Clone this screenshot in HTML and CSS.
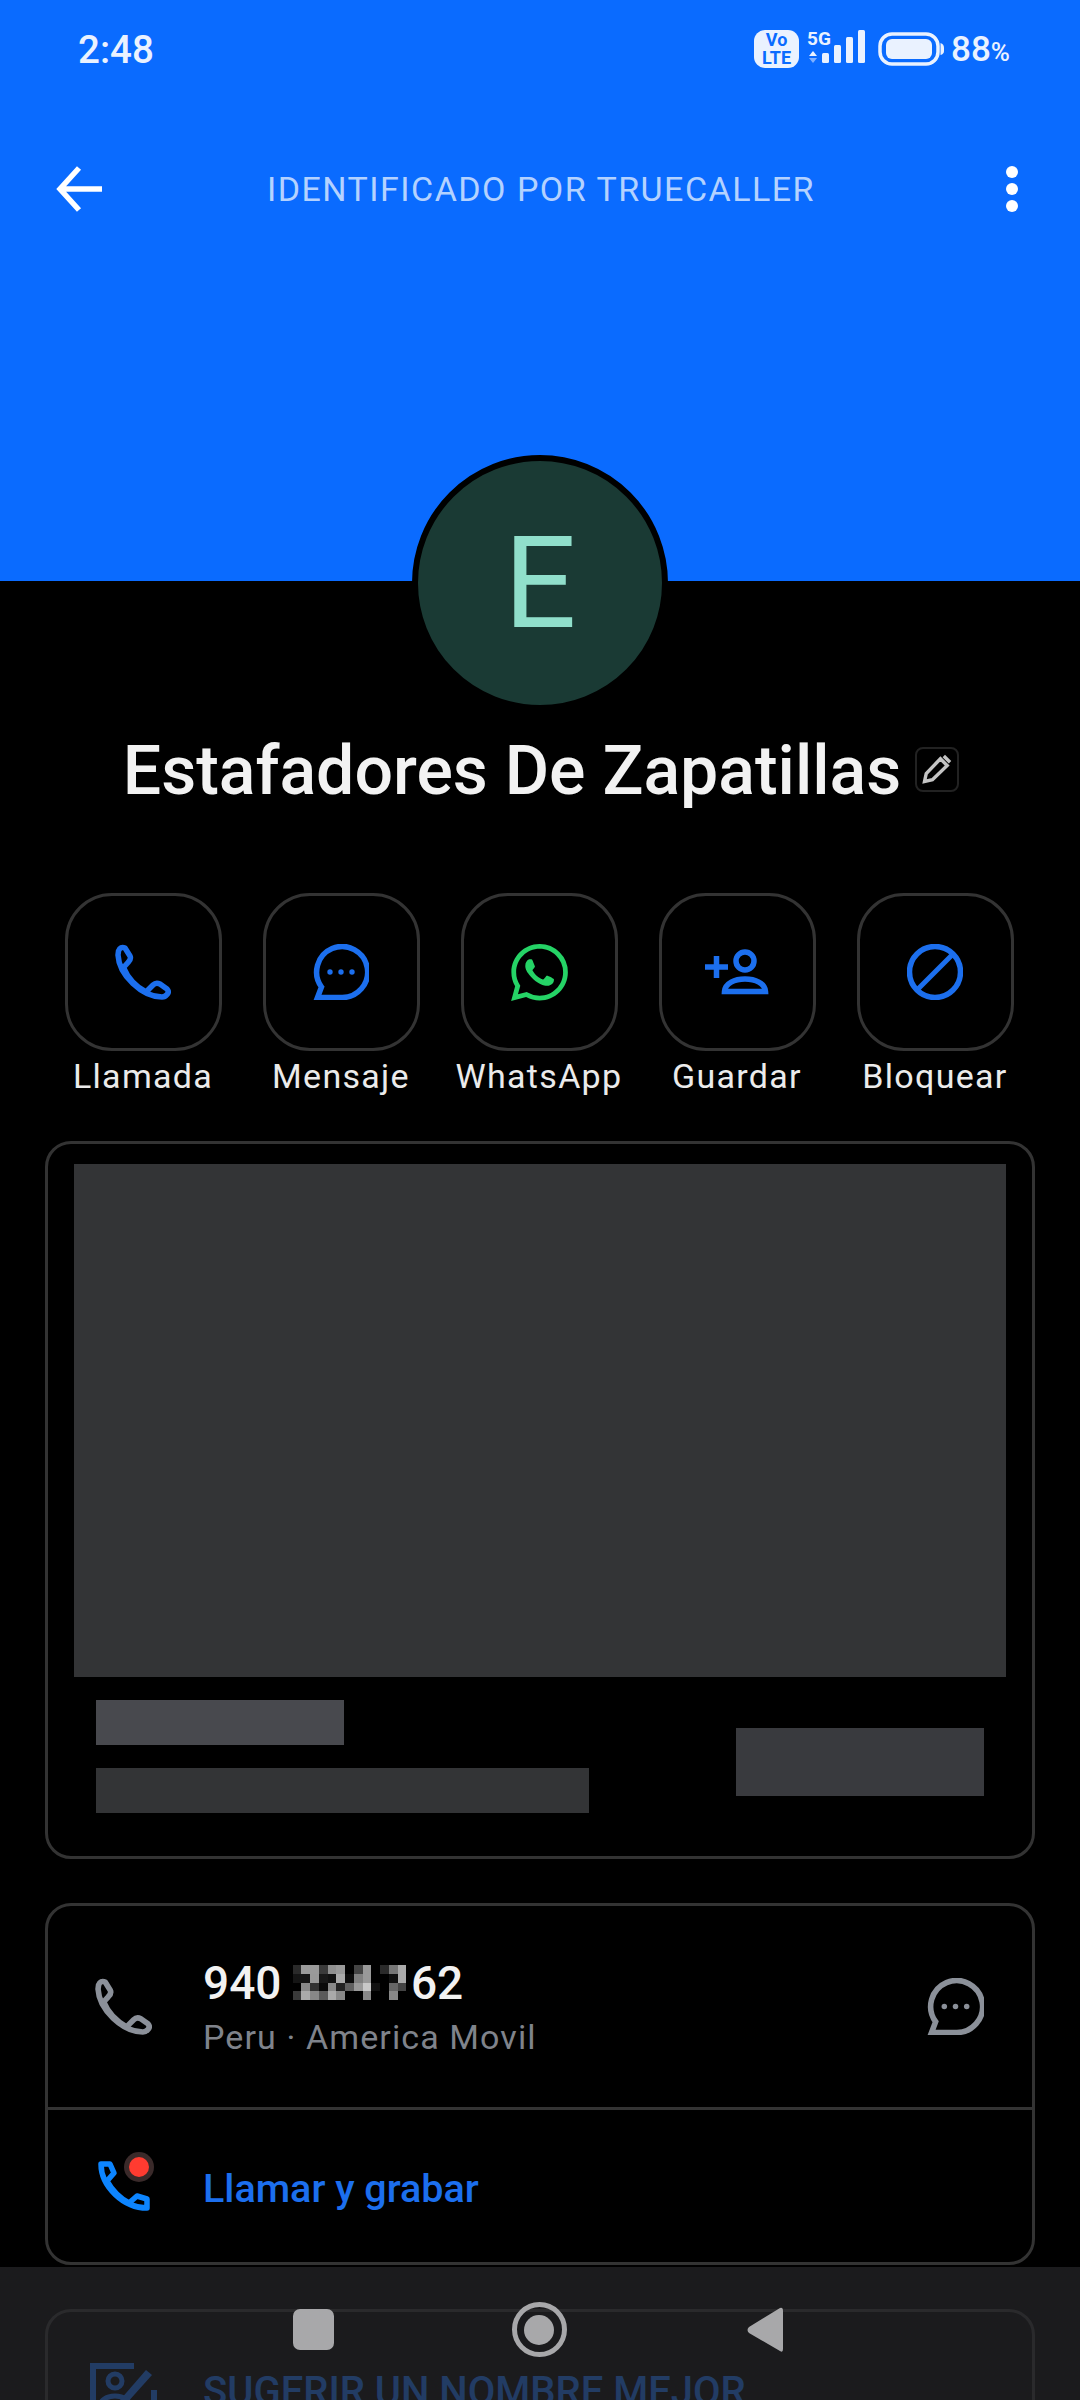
FILE: index.html
```html
<!DOCTYPE html>
<html lang="es">
<head>
<meta charset="utf-8">
<title>Estafadores De Zapatillas</title>
<link rel="stylesheet" href="styles.css">
</head>
<body>
<svg class="sprite" aria-hidden="true">
  <symbol id="phone" viewBox="0 0 56 56">
    <path fill="none" stroke="currentColor" stroke-width="5.5" stroke-linejoin="round" d="M3.5 7 Q5.5 2 10 4 L15 12 Q16.5 15 13 18.5 L8.5 23.5 C12 32 20 42 31 48 L38 41 Q41 38 45 40 L52 45 Q54.5 48 52 50.5 Q50 53 47 53 C27 53 4 31 3 11 Z"/>
  </symbol>
  <symbol id="bubble" viewBox="0 0 56 56">
    <path fill="none" stroke="currentColor" stroke-width="5.5" d="M8.5 43 A25.5 25.5 0 1 1 28 53.5 H4.5 Z"/>
    <circle cx="17" cy="28" r="2.7" fill="currentColor"/>
    <circle cx="28" cy="28" r="2.7" fill="currentColor"/>
    <circle cx="39" cy="28" r="2.7" fill="currentColor"/>
  </symbol>
</svg>

<header class="hero">
  <div class="status">
    <span class="time">2:48</span>
    <div class="status-icons">
      <span class="volte">Vo<br>LTE</span>
      <svg class="signal" viewBox="0 -6 58 44" width="58" height="44">
        <text x="0" y="15" class="five-g">5G</text>
        <path d="M2 26 L6 21 L10 26 Z" fill="#eaf2ff"/>
        <path d="M2 28 L10 28 L6 33 Z" fill="#7fb0ff"/>
        <rect x="15" y="23" width="7" height="10" rx="1.5" fill="#eaf2ff"/>
        <rect x="27" y="15" width="7" height="18" rx="1.5" fill="#eaf2ff"/>
        <rect x="39" y="7" width="7" height="26" rx="1.5" fill="#eaf2ff"/>
        <rect x="51" y="0" width="7" height="33" rx="1.5" fill="#eaf2ff"/>
      </svg>
      <svg class="battery" viewBox="0 0 66 34" width="66" height="34">
        <rect x="2" y="2" width="58" height="30" rx="12" fill="none" stroke="#eaf2ff" stroke-width="3.5"/>
        <rect x="8" y="7" width="46" height="20" rx="6" fill="#eaf2ff"/>
        <path d="M62.5 11 Q66 12 66 16 V19 Q66 22 62.5 23 Z" fill="#eaf2ff"/>
      </svg>
      <span class="pct">88<small>%</small></span>
    </div>
  </div>
  <div class="toolbar">
    <svg class="back" viewBox="0 0 46 46" width="46" height="46">
      <path d="M23 2 L4 23 L23 44 M4 23 H46" fill="none" stroke="#fff" stroke-width="5.5"/>
    </svg>
    <span class="toolbar-title">IDENTIFICADO POR TRUECALLER</span>
    <span class="dots"><i></i><i></i><i></i></span>
  </div>
</header>

<main class="content">
  <div class="avatar">E</div>

  <div class="title-row">
    <h1 class="name">Estafadores De Zapatillas</h1>
    <span class="edit">
      <svg viewBox="0 0 30 30" width="34" height="34">
        <path d="M4 26 L5.5 19 L18 6 L24 12 L11 24.5 Z M21 3.5 L26.5 9" fill="none" stroke="#c4c4c4" stroke-width="3"/>
      </svg>
    </span>
  </div>

  <div class="actions">
    <div class="action">
      <span class="action-btn accent"><svg width="56" height="56"><use href="#phone"/></svg></span>
      <span class="action-label">Llamada</span>
    </div>
    <div class="action">
      <span class="action-btn accent"><svg width="56" height="56"><use href="#bubble"/></svg></span>
      <span class="action-label">Mensaje</span>
    </div>
    <div class="action">
      <span class="action-btn"><svg viewBox="0 0 24 24" width="57" height="57"><path fill="#25d366" d="M17.472 14.382c-.297-.149-1.758-.867-2.03-.967-.273-.099-.471-.148-.67.15-.197.297-.767.966-.94 1.164-.173.199-.347.223-.644.075-.297-.15-1.255-.463-2.39-1.475-.883-.788-1.48-1.761-1.653-2.059-.173-.297-.018-.458.13-.606.134-.133.298-.347.446-.52.149-.174.198-.298.298-.497.099-.198.05-.371-.025-.52-.075-.149-.669-1.612-.916-2.207-.242-.579-.487-.5-.669-.51-.173-.008-.371-.01-.57-.01-.198 0-.52.074-.792.372-.272.297-1.04 1.016-1.04 2.479 0 1.462 1.065 2.875 1.213 3.074.149.198 2.096 3.2 5.077 4.487.709.306 1.262.489 1.694.625.712.227 1.36.195 1.871.118.571-.085 1.758-.719 2.006-1.413.248-.694.248-1.289.173-1.413-.074-.124-.272-.198-.57-.347m-5.421 7.403h-.004a9.87 9.87 0 01-5.031-1.378l-.361-.214-3.741.982.998-3.648-.235-.374a9.86 9.86 0 01-1.51-5.26c.001-5.45 4.436-9.884 9.888-9.884 2.64 0 5.122 1.03 6.988 2.898a9.825 9.825 0 012.893 6.994c-.003 5.45-4.437 9.884-9.885 9.884m8.413-18.297A11.815 11.815 0 0012.05 0C5.495 0 .16 5.335.157 11.892c0 2.096.547 4.142 1.588 5.945L.057 24l6.305-1.654a11.882 11.882 0 005.683 1.448h.005c6.554 0 11.89-5.335 11.893-11.893a11.821 11.821 0 00-3.48-8.413z"/></svg></span>
      <span class="action-label">WhatsApp</span>
    </div>
    <div class="action">
      <span class="action-btn accent">
        <svg viewBox="0 0 64 56" width="64" height="56">
          <path d="M0 23 H23 M11.5 12 V34" fill="none" stroke="currentColor" stroke-width="5.5"/>
          <circle cx="40" cy="17" r="9" fill="none" stroke="currentColor" stroke-width="5.5"/>
          <path d="M19.500 47.500 C20 39 30 35 40 35 C50 35 60 39 60.500 47.500 Z" fill="none" stroke="currentColor" stroke-width="5.5"/>
        </svg>
      </span>
      <span class="action-label">Guardar</span>
    </div>
    <div class="action">
      <span class="action-btn accent">
        <svg viewBox="0 0 56 56" width="56" height="56">
          <circle cx="28" cy="28" r="25.5" fill="none" stroke="currentColor" stroke-width="5.5"/>
          <path d="M10 46 L46 10" fill="none" stroke="currentColor" stroke-width="5"/>
        </svg>
      </span>
      <span class="action-label">Bloquear</span>
    </div>
  </div>

  <section class="card promo">
    <div class="promo-image"></div>
    <div class="promo-foot">
      <div class="promo-lines">
        <div class="bar bar-title"></div>
        <div class="bar bar-text"></div>
      </div>
      <div class="bar bar-cta"></div>
    </div>
  </section>

  <section class="card phone-card">
    <div class="number-row">
      <svg class="row-icon muted" width="57" height="57"><use href="#phone"/></svg>
      <div class="number-text">
        <div class="number">940 <svg class="blur" viewBox="0 0 13 4" width="117" height="35" shape-rendering="crispEdges">
          <rect x="0" y="0" width="1" height="1" fill="#2a2a2a"/><rect x="1" y="0" width="2" height="1" fill="#9a9a9a"/><rect x="3" y="0" width="1" height="1" fill="#3a3a3a"/><rect x="4" y="0" width="1" height="1" fill="#8f8f8f"/><rect x="5" y="0" width="1" height="1" fill="#999"/><rect x="7" y="0" width="1" height="1" fill="#444"/><rect x="8" y="0" width="1" height="1" fill="#999"/><rect x="10" y="0" width="1" height="1" fill="#2a2a2a"/><rect x="11" y="0" width="1" height="1" fill="#777"/><rect x="12" y="0" width="1" height="1" fill="#aaa"/>
          <rect x="0" y="1" width="2" height="1" fill="#151515"/><rect x="2" y="1" width="1" height="1" fill="#999"/><rect x="3" y="1" width="1" height="1" fill="#181818"/><rect x="4" y="1" width="1" height="1" fill="#111"/><rect x="5" y="1" width="1" height="1" fill="#aaa"/><rect x="6" y="1" width="1" height="1" fill="#0c0c0c"/><rect x="7" y="1" width="1" height="1" fill="#808080"/><rect x="8" y="1" width="1" height="1" fill="#999"/><rect x="11" y="1" width="1" height="1" fill="#111"/><rect x="12" y="1" width="1" height="1" fill="#aaa"/>
          <rect x="1" y="2" width="1" height="1" fill="#888"/><rect x="2" y="2" width="1" height="1" fill="#333"/><rect x="3" y="2" width="1" height="1" fill="#0a0a0a"/><rect x="4" y="2" width="1" height="1" fill="#888"/><rect x="5" y="2" width="1" height="1" fill="#222"/><rect x="6" y="2" width="1" height="1" fill="#606060"/><rect x="7" y="2" width="1" height="1" fill="#999"/><rect x="8" y="2" width="1" height="1" fill="#c8c8c8"/><rect x="9" y="2" width="1" height="1" fill="#111"/><rect x="11" y="2" width="1" height="1" fill="#666"/><rect x="12" y="2" width="1" height="1" fill="#444"/>
          <rect x="0" y="3" width="1" height="1" fill="#3a3a3a"/><rect x="1" y="3" width="1" height="1" fill="#aaa"/><rect x="2" y="3" width="1" height="1" fill="#888"/><rect x="3" y="3" width="1" height="1" fill="#5a5a5a"/><rect x="4" y="3" width="1" height="1" fill="#aaa"/><rect x="5" y="3" width="1" height="1" fill="#888"/><rect x="8" y="3" width="1" height="1" fill="#888"/><rect x="11" y="3" width="1" height="1" fill="#888"/>
        </svg>62</div>
        <div class="carrier">Peru · America Movil</div>
      </div>
      <svg class="muted" width="57" height="57"><use href="#bubble"/></svg>
    </div>
    <div class="record-row">
      <svg class="record-icon" viewBox="0 0 60 60" width="60" height="60">
        <path d="M3 12 H12 L16 21 L9 29 C14 38 22 46 31 51 L39 44 L49 47 V56 C26 56 3 35 3 12 Z" fill="none" stroke="#0d85ff" stroke-width="5.5" stroke-linejoin="round"/>
        <circle cx="41" cy="15" r="15" fill="#3a2a2a"/>
        <circle cx="41" cy="15" r="10" fill="#ff3b30"/>
      </svg>
      <span class="record-text">Llamar y grabar</span>
    </div>
  </section>

  <section class="card suggest-card">
    <div class="suggest-row">
      <svg class="suggest-icon" viewBox="0 0 68 68" width="68" height="68">
        <path d="M44 4 H3 V66 H64 V28" fill="none" stroke="#1a6fee" stroke-width="6"/>
        <path d="M30 38 L56 8 L62 13 L36 42 L29 44 Z" fill="#1a6fee"/>
        <circle cx="25" cy="19" r="7" fill="none" stroke="#1a6fee" stroke-width="5"/>
        <path d="M9 48 C9 38 17 34 25 34 C33 34 41 38 41 48" fill="none" stroke="#1a6fee" stroke-width="5"/>
      </svg>
      <span class="suggest-text">SUGERIR UN NOMBRE MEJOR</span>
    </div>
  </section>
</main>

<nav class="navbar">
  <span class="nav-slot"><span class="nav-square"></span></span>
  <span class="nav-slot"><span class="nav-home"><i></i></span></span>
  <span class="nav-slot">
    <svg viewBox="0 0 37 46" width="37" height="46"><path d="M33 1 Q36 0 36 4 V42 Q36 46 33 44 L2 26 Q-1 23 2 20 Z" fill="#a8a8aa"/></svg>
  </span>
</nav>
</body>
</html>
```
FILE: styles.css
```css
* { box-sizing: border-box; }
html, body { margin: 0; padding: 0; background: #000; }
body {
  position: relative;
  width: 1080px;
  height: 2400px;
  overflow: hidden;
  font-family: Roboto, "Liberation Sans", sans-serif;
  color: #f2f2f2;
}
.sprite { position: absolute; width: 0; height: 0; }
svg { display: block; flex: none; }

/* hero */
.hero { height: 581px; background: #0a6bff; }
.status {
  height: 98px;
  padding: 0 70px 0 78px;
  display: flex;
  align-items: center;
  justify-content: space-between;
}
.time { font-size: 38.5px; font-weight: 500; color: #eaf2ff; }
.status-icons { display: flex; align-items: center; }
.volte {
  width: 45px;
  height: 38px;
  border-radius: 11px;
  background: #eaf2ff;
  color: #0a6bff;
  font-size: 18px;
  font-weight: 700;
  line-height: 18px;
  text-align: center;
  padding-top: 1px;
}
.signal { margin: -6px 0 0 8px; }
.five-g { font: 700 19px Roboto, sans-serif; fill: #eaf2ff; }
.battery { margin-left: 13px; }
.pct { margin-left: 7px; font-size: 35px; font-weight: 500; color: #eaf2ff; }
.pct small { font-size: 26px; }

.toolbar {
  height: 182px;
  padding: 0 62px 0 56px;
  display: grid;
  grid-template-columns: 1fr auto 1fr;
  align-items: center;
}
.toolbar-title {
  margin-left: 8px;
  font-size: 34px;
  letter-spacing: 1.48px;
  color: #b4d2ff;
}
.dots { justify-self: end; display: flex; flex-direction: column; gap: 5px; }
.dots i { display: block; width: 12px; height: 12px; border-radius: 50%; background: #fff; }

/* content */
.content { padding: 0 45px; display: flex; flex-direction: column; }
.avatar {
  align-self: center;
  margin-top: -126px;
  width: 256px;
  height: 256px;
  border: 6px solid #000;
  border-radius: 50%;
  background: #1a3a34;
  color: #90dfcb;
  font-size: 128px;
  line-height: 244px;
  text-align: center;
}
.title-row {
  margin: 20px 0 0 2px;
  display: flex;
  align-items: center;
  justify-content: center;
  gap: 14px;
}
.name { margin: 0; font-size: 68px; font-weight: 500; line-height: 80px; color: #f2f2f2; }
.edit {
  width: 44px;
  height: 45px;
  border: 2px solid #222;
  border-radius: 8px;
  display: flex;
  align-items: center;
  justify-content: center;
  margin-top: -4px;
}

.actions {
  margin: 82px 1px 0 -1px;
  display: grid;
  grid-template-columns: repeat(5, 1fr);
}
.action { display: flex; flex-direction: column; align-items: center; }
.action-btn {
  width: 157px;
  height: 158px;
  border: 3px solid #333;
  border-radius: 47px;
  display: flex;
  align-items: center;
  justify-content: center;
}
.accent { color: #1c6fee; }
.action-label {
  margin-top: 3px;
  font-size: 34px;
  line-height: 44px;
  letter-spacing: 1.3px;
  color: #ebebeb;
}

.card { border: 3px solid #333; border-radius: 26px; }
.promo {
  margin-top: 43px;
  height: 718px;
  padding: 20px 26px 0;
}
.promo-image { height: 513px; background: #333436; }
.promo-foot {
  margin-top: 23px;
  padding: 0 22px;
  display: flex;
  justify-content: space-between;
  align-items: flex-start;
}
.promo-lines { display: flex; flex-direction: column; gap: 23px; }
.bar { height: 45px; }
.bar-title { width: 248px; background: #48494e; }
.bar-text { width: 493px; background: #333436; }
.bar-cta { width: 248px; height: 68px; margin-top: 28px; background: #393a3e; }

.phone-card { margin-top: 44px; height: 362px; }
.muted { color: #8b9099; }
.number-row {
  height: 204px;
  padding: 0 48px 0 47px;
  border-bottom: 3px solid #333;
  display: flex;
  align-items: center;
}
.row-icon { margin-right: 51px; }
.number-text { flex: 1; }
.number {
  display: flex;
  align-items: center;
  font-size: 46px;
  font-weight: 500;
  line-height: 54px;
  color: #f2f2f2;
  white-space: pre;
}
.blur { margin: 0 3px 0 -2px; }
.carrier { margin-top: 6px; font-size: 34px; line-height: 42px; letter-spacing: 1.1px; color: #7f838b; }
.record-row {
  height: 150px;
  padding: 0 0 0 50px;
  display: flex;
  align-items: center;
}
.record-icon { margin-right: 45px; margin-top: -6px; }
.record-text { margin-top: 6px; font-size: 39.5px; font-weight: 500; color: #1c6fee; }

.suggest-card { margin-top: 44px; height: 200px; }
.suggest-row { padding: 50px 0 0 42px; display: flex; align-items: flex-start; }
.suggest-icon { margin-right: 45px; }
.suggest-text { font-size: 40px; font-weight: 500; line-height: 44px; margin-top: 8px; color: #1a6fee; }

/* nav overlay */
.navbar {
  position: absolute;
  left: 0;
  right: 0;
  top: 2267px;
  bottom: 0;
  background: rgba(39, 39, 41, .7);
  display: grid;
  grid-template-columns: repeat(3, 226px);
  justify-content: center;
  padding: 35px 2px 0 0;
}
.nav-slot { display: flex; justify-content: center; align-items: center; height: 55px; }
.nav-square { width: 41px; height: 41px; border-radius: 7px; background: #a8a8aa; }
.nav-home {
  width: 55px;
  height: 55px;
  border: 5px solid #a8a8aa;
  border-radius: 50%;
  display: flex;
  align-items: center;
  justify-content: center;
}
.nav-home i { display: block; width: 30px; height: 30px; border-radius: 50%; background: #a8a8aa; }
```
